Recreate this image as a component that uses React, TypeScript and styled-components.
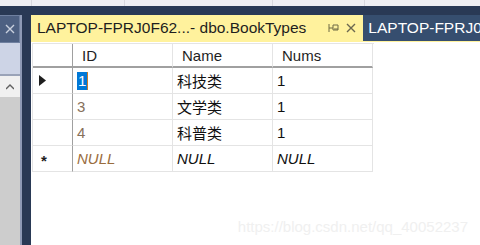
import React from "react";
import styled, { createGlobalStyle } from "styled-components";

const Global = createGlobalStyle`
  html, body { margin: 0; padding: 0; }
  body { width: 480px; height: 245px; overflow: hidden; background: #293955; }
  #root { width: 480px; height: 245px; }
`;

const UI = `"Liberation Sans", "Noto Sans CJK SC", sans-serif`;

const Window = styled.div`
  width: 480px;
  height: 245px;
  background: #293955;
  display: flex;
  flex-direction: column;
  overflow: hidden;
  font-family: ${UI};
`;

const TopStrip = styled.div`
  height: 6px;
  flex: none;
  background: #eeeef2;
  display: grid;
  grid-template-columns: 32px 93px 148px 92px 1fr;
`;

const StripCell = styled.div`
  border-right: 1px solid #d8d8de;
  &:last-child { border-right: none; }
`;

const Body = styled.div`
  flex: 1;
  display: flex;
  gap: 9px;
  padding-top: 9px;
  min-height: 0;
`;

const LeftPanel = styled.div`
  width: 20px;
  flex: none;
  display: flex;
  flex-direction: column;
  border-right: 2px solid #8e9ab6;
`;

const SideTab = styled.div`
  height: 28px;
  background: #4d6082;
  border: 1px solid #6f80a0;
  border-left: none;
  display: flex;
  align-items: center;
  justify-content: center;
  color: #c9d0de;
  box-sizing: border-box;
`;

const SideHead = styled.div`
  height: 31px;
  background: #cdd4e6;
  border-bottom: 2px solid #9aa3b8;
`;

const ScrollUp = styled.div`
  height: 21px;
  background: #f0f0f0;
  display: flex;
  align-items: center;
  justify-content: center;
  color: #555;
`;

const ScrollTrack = styled.div`
  flex: 1;
  background: #cdcdcd;
`;

const DocWell = styled.div`
  flex: 1;
  display: flex;
  flex-direction: column;
  min-width: 0;
`;

const TabBar = styled.div`
  height: 26px;
  flex: none;
  display: flex;
  overflow: hidden;
  border-bottom: 1px solid #fff29d;
`;

const Tab = styled.div<{ $active?: boolean }>`
  flex: ${(p) => (p.$active ? "none" : "1")};
  min-width: 0;
  overflow: hidden;
  display: flex;
  align-items: center;
  padding-left: ${(p) => (p.$active ? "6px" : "5px")};
  padding-right: ${(p) => (p.$active ? "7px" : "0")};
  background: ${(p) => (p.$active ? "#fff29d" : "#364e6f")};
  color: ${(p) => (p.$active ? "#1e1e1e" : "#ffffff")};
  font-size: 15.5px;
  white-space: nowrap;
`;

const TabTitle = styled.span`
  margin-right: 16px;
`;

const TabIcon = styled.span`
  display: flex;
  align-items: center;
  margin-left: 6px;
`;

const Content = styled.div`
  flex: 1;
  background: #ffffff;
  padding: 1px 0 0 1px;
  position: relative;
`;

const Grid = styled.div`
  display: grid;
  grid-template-columns: 40px 100px 100px 100px;
  width: 341px;
  border-left: 1px solid #e4e4e4;
  border-top: 1px solid #e4e4e4;
`;

const HeadCell = styled.div<{ $corner?: boolean }>`
  height: 22px;
  border-bottom: 2px solid #a0a0a0;
  border-right: 1px solid ${(p) => (p.$corner ? "#a0a0a0" : "#e4e4e4")};
  padding-left: 9px;
  display: flex;
  align-items: center;
  font-size: 15px;
  color: #1e1e1e;
`;

const RowHead = styled.div`
  height: 25px;
  border-bottom: 1px solid #e4e4e4;
  border-right: 1px solid #a0a0a0;
  display: flex;
  align-items: center;
  padding-left: 6px;
  color: #1e1e1e;
`;

const Cell = styled.div<{ $tone?: "id" | "null" | "idnull" }>`
  height: 25px;
  border-bottom: 1px solid #e4e4e4;
  border-right: 1px solid #e4e4e4;
  display: flex;
  align-items: center;
  padding-left: 4px;
  font-size: 15px;
  font-style: ${(p) => (p.$tone === "null" || p.$tone === "idnull" ? "italic" : "normal")};
  color: ${(p) =>
    p.$tone === "id" ? "#86705a" : p.$tone === "idnull" ? "#9a6d3e" : "#101010"};
`;

const Selected = styled.span`
  background: #0078d7;
  color: #ffffff;
  padding: 0 1px;
  line-height: 18px;
  border-right: 1px solid #c87a2a;
`;

const Star = styled.span`
  font-size: 15px;
  font-weight: bold;
  margin-left: 2px;
  margin-top: 4px;
`;

const Watermark = styled.div`
  position: absolute;
  right: 12px;
  bottom: 10px;
  font-family: "Liberation Sans", sans-serif;
  font-size: 15px;
  color: #f0f0f0;
`;

const Pin = () => (
  <svg width="12" height="10" viewBox="0 0 12 10">
    <path d="M1 1v8M1 5h4M5 2h5v5H5z M6 6h4" stroke="#6f6a45" strokeWidth="1" fill="none" />
  </svg>
);

const Close = ({ color, size = 10 }: { color: string; size?: number }) => (
  <svg width={size} height={size} viewBox="0 0 10 10">
    <path d="M1 1L9 9M9 1L1 9" stroke={color} strokeWidth="1.4" fill="none" />
  </svg>
);

const Arrow = () => (
  <svg width="8" height="8" viewBox="0 0 8 8">
    <path d="M0 6L4 2L8 6" stroke="#606060" strokeWidth="1.4" fill="none" />
  </svg>
);

const Tri = () => (
  <svg width="7" height="11" viewBox="0 0 7 11">
    <path d="M0 0L7 5.5L0 11z" fill="#1e1e1e" />
  </svg>
);

const rows: { id: string; name: string; nums: string; current?: boolean }[] = [
  { id: "1", name: "科技类", nums: "1", current: true },
  { id: "3", name: "文学类", nums: "1" },
  { id: "4", name: "科普类", nums: "1" },
];

export default function App() {
  return (
    <>
      <Global />
      <Window>
        <TopStrip>
          <StripCell />
          <StripCell />
          <StripCell />
          <StripCell />
          <StripCell />
        </TopStrip>
        <Body>
          <LeftPanel>
            <SideTab>
              <Close color="#c9d0de" />
            </SideTab>
            <SideHead />
            <ScrollUp>
              <Arrow />
            </ScrollUp>
            <ScrollTrack />
          </LeftPanel>
          <DocWell>
            <TabBar>
              <Tab $active>
                <TabTitle>LAPTOP-FPRJ0F62...- dbo.BookTypes</TabTitle>
                <TabIcon>
                  <Pin />
                </TabIcon>
                <TabIcon>
                  <Close color="#6b6850" />
                </TabIcon>
              </Tab>
              <Tab>LAPTOP-FPRJ0F</Tab>
            </TabBar>
            <Content>
              <Grid>
                <HeadCell $corner />
                <HeadCell>ID</HeadCell>
                <HeadCell>Name</HeadCell>
                <HeadCell>Nums</HeadCell>
                {rows.map((r) => (
                  <React.Fragment key={r.id}>
                    <RowHead>{r.current ? <Tri /> : null}</RowHead>
                    <Cell $tone={r.current ? undefined : "id"}>
                      {r.current ? <Selected>{r.id}</Selected> : r.id}
                    </Cell>
                    <Cell>{r.name}</Cell>
                    <Cell>{r.nums}</Cell>
                  </React.Fragment>
                ))}
                <RowHead>
                  <Star>*</Star>
                </RowHead>
                <Cell $tone="idnull">NULL</Cell>
                <Cell $tone="null">NULL</Cell>
                <Cell $tone="null">NULL</Cell>
              </Grid>
              <Watermark>https://blog.csdn.net/qq_40052237</Watermark>
            </Content>
          </DocWell>
        </Body>
      </Window>
    </>
  );
}
